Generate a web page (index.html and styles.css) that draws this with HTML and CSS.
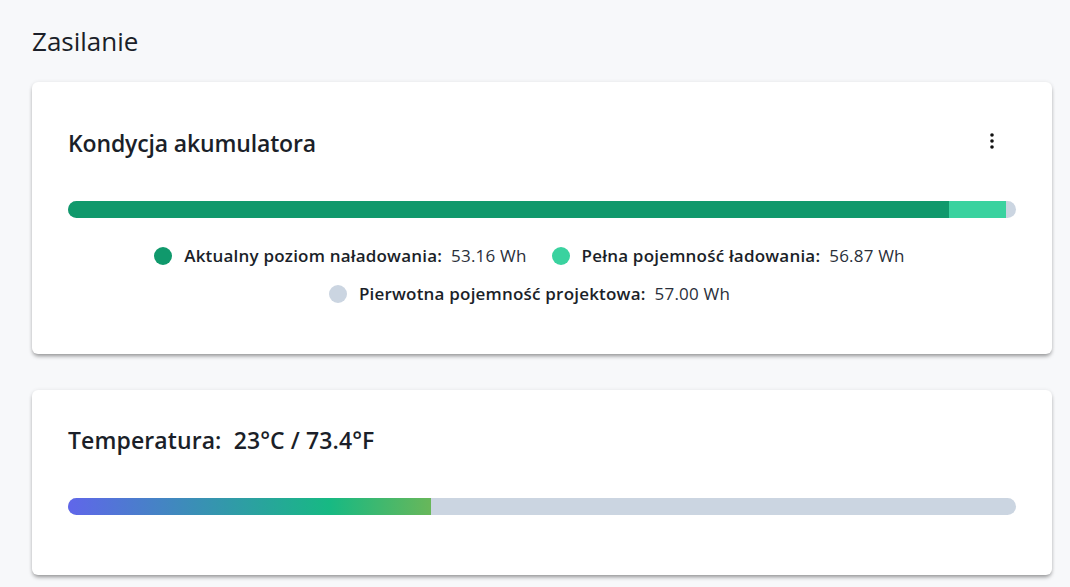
FILE: index.html
```html
<!DOCTYPE html>
<html lang="pl">
<head>
    <meta charset="UTF-8">
    <meta name="viewport" content="width=device-width, initial-scale=1.0">
    <title>Zasilanie</title>
    <link rel="stylesheet" href="styles.css">
</head>
<body>
    <h1 class="page-title">Zasilanie</h1>

    <!-- Battery health -->
    <section class="card">
        <div class="card-header">
            <h2 class="card-title">Kondycja akumulatora</h2>
            <button class="more-btn" aria-label="Więcej">
                <svg width="4" height="16" viewBox="0 0 4 16">
                    <circle cx="2" cy="2" r="1.8" fill="#111"/>
                    <circle cx="2" cy="8" r="1.8" fill="#111"/>
                    <circle cx="2" cy="14" r="1.8" fill="#111"/>
                </svg>
            </button>
        </div>
        <div class="bar battery-bar">
            <div class="seg seg-current" style="width: 92.9%"></div>
            <div class="seg seg-full" style="width: 6%"></div>
        </div>
        <div class="legend">
            <div class="legend-item"><span class="dot dot-current"></span><b>Aktualny poziom naładowania:</b> 53.16 Wh</div>
            <div class="legend-item"><span class="dot dot-full"></span><b>Pełna pojemność ładowania:</b> 56.87 Wh</div>
            <div class="legend-item"><span class="dot dot-design"></span><b>Pierwotna pojemność projektowa:</b> 57.00 Wh</div>
        </div>
    </section>

    <!-- Temperature -->
    <section class="card card-temp">
        <h2 class="card-title">Temperatura:&nbsp; 23°C / 73.4°F</h2>
        <div class="bar temp-bar">
            <div class="seg seg-temp" style="width: 38.3%"></div>
        </div>
    </section>
</body>
</html>
```

FILE: styles.css
```css
body {
    margin: 0;
    padding: 24px 18px 40px 32px;
    background-color: #f7f8fa;
    font-family: "Open Sans", "Noto Sans", sans-serif;
    color: #1b1f29;
}
.page-title {
    font-size: 26px;
    font-weight: 500;
    margin: 0 0 24px 0;
    line-height: 34px;
}
.card {
    background-color: #fff;
    border-radius: 6px;
    padding: 36px 36px 48px 36px;
    margin-bottom: 36px;
    box-shadow: 0 3px 4px -1px rgba(0, 0, 0, 0.4), 0 0 4px rgba(0, 0, 0, 0.07);
}
.card-header {
    display: flex;
    align-items: center;
    justify-content: space-between;
    height: 50px;
    margin-bottom: 33px;
}
.card-title {
    font-size: 23px;
    font-weight: 600;
    margin: 0;
    line-height: 28px;
    letter-spacing: -0.15px;
}
.more-btn {
    width: 36px;
    height: 36px;
    margin-right: 6px;
    margin-top: -4px;
    border: none;
    background: transparent;
    display: flex;
    align-items: center;
    justify-content: center;
    cursor: pointer;
    border-radius: 50%;
}
.bar {
    height: 17px;
    border-radius: 9px;
    background-color: #cbd5e1;
    display: flex;
    overflow: hidden;
}
.seg {
    height: 100%;
}
.seg-current {
    background-color: #10996c;
}
.seg-full {
    background-color: #3ad29f;
}
.legend {
    display: flex;
    flex-wrap: wrap;
    justify-content: center;
    row-gap: 14px;
    margin-top: 26px;
    padding: 0 40px;
}
.legend-item {
    display: flex;
    align-items: center;
    font-size: 17px;
    line-height: 24px;
    letter-spacing: 0.2px;
    margin-right: 25px;
    color: #2a2f3a;
}
.legend-item b {
    font-weight: 600;
    color: #1b1f29;
    margin-right: 9px;
}
.dot {
    width: 18px;
    height: 18px;
    border-radius: 50%;
    margin-right: 12px;
}
.dot-current {
    background-color: #10996c;
}
.dot-full {
    background-color: #3ad29f;
}
.dot-design {
    background-color: #cbd5e1;
}
.card-temp {
    padding-bottom: 60px;
}
.card-temp .card-title {
    margin-bottom: 44px;
    letter-spacing: 0.1px;
}
.seg-temp {
    background: linear-gradient(90deg, #6066ea 0%, #3a8fb6 35%, #17b983 72%, #68b75a 100%);
}
```
